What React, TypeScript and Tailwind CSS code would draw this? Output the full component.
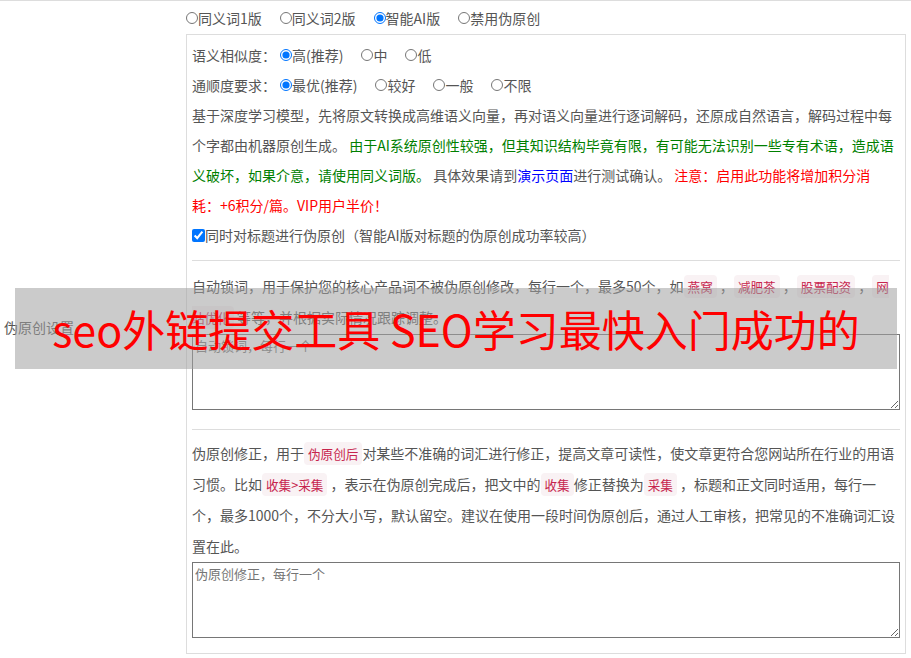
import React from "react";

const font = { fontFamily: '"Microsoft YaHei", "Noto Sans CJK SC", "Noto Sans", sans-serif' };

function Code({ children }: { children: React.ReactNode }) {
  return (
    <code className="bg-[#f9f2f4] text-[#c7254e] px-[4px] py-[2px] rounded-[4px] text-[12.6px] font-[inherit]">
      {children}
    </code>
  );
}

function Radio({ label, checked, name, mr = true }: { label: string; checked?: boolean; name: string; mr?: boolean }) {
  return (
    <label className={`inline-flex items-center ${mr ? "mr-[18px]" : ""}`}>
      <input type="radio" name={name} defaultChecked={checked} className="m-0 w-[12px] h-[12px]" />
      <span>{label}</span>
    </label>
  );
}

export default function App() {
  return (
    <div className="relative w-[911px] h-[658px] overflow-hidden bg-white text-[14px] text-[#555]" style={font}>
      <div className="flex border-t border-[#ddd]">
        <div className="w-[186px] shrink-0 flex items-center pl-[4px]">伪原创设置</div>
        <div className="w-[720px] pt-[2px]">
          <div className="h-[30px] leading-[30px] flex items-center">
            <Radio name="v" label="同义词1版" />
            <Radio name="v" label="同义词2版" />
            <Radio name="v" label="智能AI版" checked />
            <Radio name="v" label="禁用伪原创" mr={false} />
          </div>
          <div className="mt-[1px] border border-[#ddd] px-[5px] pt-[5px] pb-[15px]">
            <div className="h-[30px] flex items-center">
              <span className="mr-[4px]">语义相似度：</span>
              <Radio name="s" label="高(推荐)" checked />
              <Radio name="s" label="中" />
              <Radio name="s" label="低" mr={false} />
            </div>
            <div className="h-[30px] flex items-center">
              <span className="mr-[4px]">通顺度要求：</span>
              <Radio name="f" label="最优(推荐)" checked />
              <Radio name="f" label="较好" />
              <Radio name="f" label="一般" />
              <Radio name="f" label="不限" mr={false} />
            </div>
            <p className="leading-[30px]">
              基于深度学习模型，先将原文转换成高维语义向量，再对语义向量进行逐词解码，还原成自然语言，解码过程中每个字都由机器原创生成。{" "}
              <span className="text-[#008000]">由于AI系统原创性较强，但其知识结构毕竟有限，有可能无法识别一些专有术语，造成语义破坏，如果介意，请使用同义词版。</span>{" "}
              具体效果请到<span className="text-[#0000ff]">演示页面</span>进行测试确认。{" "}
              <span className="text-[#ff0000]">注意：启用此功能将增加积分消<br />耗：+6积分/篇。VIP用户半价！</span>
            </p>
            <label className="h-[30px] flex items-center">
              <input type="checkbox" defaultChecked className="m-0 w-[13px] h-[13px]" />
              <span>同时对标题进行伪原创（智能AI版对标题的伪原创成功率较高）</span>
            </label>
            <hr className="mt-[10px] mb-[10px] border-t border-[#ddd]" />
            <p className="leading-[30px]">
              自动锁词，用于保护您的核心产品词不被伪原创修改，每行一个，最多50个，如<Code>燕窝</Code> ，<Code>减肥茶</Code> ，<Code>股票配资</Code> ，<Code>网站优化</Code> 等等，并根据实际情况跟踪调整。
            </p>
            <textarea
              className="block mt-[1px] w-full h-[76px] border border-[#767676] px-[2px] py-[1px] text-[13px] placeholder:text-[#757575] resize-y"
              placeholder="自动锁词，每行一个"
              style={font}
            />
            <hr className="mt-[19px] mb-[8px] border-t border-[#ddd]" />
            <p className="leading-[31px]">
              伪原创修正，用于<Code>伪原创后</Code>对某些不准确的词汇进行修正，提高文章可读性，使文章更符合您网站所在行业的用语习惯。比如<Code>收集&gt;采集</Code> ，表示在伪原创完成后，把文中的<Code>收集</Code>修正替换为<Code>采集</Code> ，标题和正文同时适用，每行一个，最多1000个，不分大小写，默认留空。建议在使用一段时间伪原创后，通过人工审核，把常见的不准确词汇设置在此。
            </p>
            <textarea
              className="block w-full h-[76px] border border-[#767676] px-[2px] py-[1px] text-[13px] placeholder:text-[#757575] resize-y"
              placeholder="伪原创修正，每行一个"
              style={font}
            />
          </div>
        </div>
      </div>
      <div className="absolute left-[15px] top-[288px] w-[882px] h-[81px] bg-[rgba(160,160,160,0.55)] flex items-center justify-center">
        <span className="text-[#ff0000] text-[43px] leading-none whitespace-nowrap" style={font}>
          seo外链提交工具 SEO学习最快入门成功的
        </span>
      </div>
    </div>
  );
}
